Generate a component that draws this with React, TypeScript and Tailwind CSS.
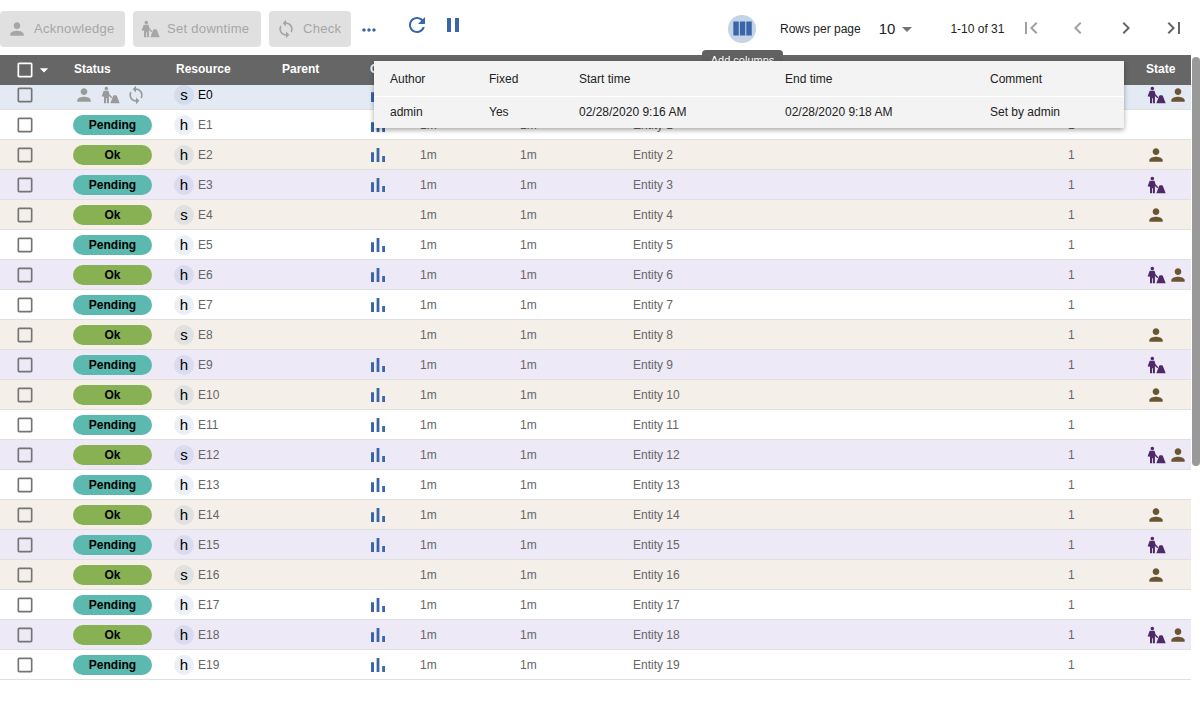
import React from 'react';

const paths = {
  person: 'M12 12c2.21 0 4-1.79 4-4s-1.79-4-4-4-4 1.79-4 4 1.79 4 4 4zm0 2c-2.67 0-8 1.34-8 4v2h16v-2c0-2.66-5.33-4-8-4z',
  sync: 'M12 4V1L8 5l4 4V6c3.31 0 6 2.69 6 6 0 1.01-.25 1.97-.7 2.8l1.46 1.46C19.54 15.03 20 13.57 20 12c0-4.42-3.58-8-8-8zm0 14c-3.31 0-6-2.69-6-6 0-1.01.25-1.97.7-2.8L5.24 7.74C4.46 8.97 4 10.43 4 12c0 4.42 3.58 8 8 8v3l4-4-4-4v3z',
  refresh: 'M17.65 6.35C16.2 4.9 14.21 4 12 4c-4.42 0-7.99 3.58-7.99 8s3.57 8 7.99 8c3.73 0 6.84-2.55 7.73-6h-2.08c-.82 2.33-3.04 4-5.65 4-3.31 0-6-2.69-6-6s2.69-6 6-6c1.66 0 3.14.69 4.22 1.78L13 11h7V4l-2.35 2.35z',
  pause: 'M6 19h4V5H6v14zm8-14v14h4V5h-4z',
  columns: 'M10 18h5V5h-5v13zm-6 0h5V5H4v13zM16 5v13h5V5h-5z',
  bars: 'M5 9.2h3V19H5zM10.6 5h2.8v14h-2.8zm5.6 8H19v6h-2.8z',
  first: 'M18.41 16.59L13.82 12l4.59-4.59L17 6l-6 6 6 6zM6 6h2v12H6z',
  last: 'M5.59 7.41L10.18 12l-4.59 4.59L7 18l6-6-6-6zM16 6h2v12h-2z',
  left: 'M15.41 16.59L10.83 12l4.58-4.59L14 6l-6 6 6 6 1.41-1.41z',
  right: 'M8.59 16.59L13.17 12 8.59 7.41 10 6l6 6-6 6-1.41-1.41z',
  checkbox: 'M19 5v14H5V5h14m0-2H5c-1.1 0-2 .9-2 2v14c0 1.1.9 2 2 2h14c1.1 0 2-.9 2-2V5c0-1.1-.9-2-2-2z',
  more: 'M6 10c-1.1 0-2 .9-2 2s.9 2 2 2 2-.9 2-2-.9-2-2-2zm12 0c-1.1 0-2 .9-2 2s.9 2 2 2 2-.9 2-2-.9-2-2-2zm-6 0c-1.1 0-2 .9-2 2s.9 2 2 2 2-.9 2-2-.9-2-2-2z',
  drop: 'M7 10l5 5 5-5z',
  downtime: 'M7.6 2a2.2 2.2 0 1 1 0 4.4a2.2 2.2 0 0 1 0-4.4zM4.4 7h5.8l1.2 4.2 3.3 3.6-1 1-3-2.6V22H8.3v-6.2H7.3V22H4.8v-8.2l-1.1.4L2 13.4zM12.4 22l3-8c.4-1 1.1-1.6 2.1-1.6h1c1 0 1.7.6 2.1 1.6l3 8z',
};

const Icon = ({ d, className }: { d: string; className: string }) => (
  <svg viewBox="0 0 24 24" fill="currentColor" className={className}>
    <path d={d} />
  </svg>
);

type RowData = {
  res: string;
  status: 'Pending' | 'Ok';
  bg: string;
  graph: boolean;
  downtime: boolean;
  ack: boolean;
};

const WHITE = 'bg-white';
const TAN = 'bg-[#f4f0e9]';
const PURPLE = 'bg-[#ede9f7]';

const rows: RowData[] = [
  { res: 's', status: 'Ok', bg: 'bg-[#e4eaf4]', graph: true, downtime: true, ack: true },
  { res: 'h', status: 'Pending', bg: WHITE, graph: true, downtime: false, ack: false },
  { res: 'h', status: 'Ok', bg: TAN, graph: true, downtime: false, ack: true },
  { res: 'h', status: 'Pending', bg: PURPLE, graph: true, downtime: true, ack: false },
  { res: 's', status: 'Ok', bg: TAN, graph: false, downtime: false, ack: true },
  { res: 'h', status: 'Pending', bg: WHITE, graph: true, downtime: false, ack: false },
  { res: 'h', status: 'Ok', bg: PURPLE, graph: true, downtime: true, ack: true },
  { res: 'h', status: 'Pending', bg: WHITE, graph: true, downtime: false, ack: false },
  { res: 's', status: 'Ok', bg: TAN, graph: false, downtime: false, ack: true },
  { res: 'h', status: 'Pending', bg: PURPLE, graph: true, downtime: true, ack: false },
  { res: 'h', status: 'Ok', bg: TAN, graph: true, downtime: false, ack: true },
  { res: 'h', status: 'Pending', bg: WHITE, graph: true, downtime: false, ack: false },
  { res: 's', status: 'Ok', bg: PURPLE, graph: true, downtime: true, ack: true },
  { res: 'h', status: 'Pending', bg: WHITE, graph: true, downtime: false, ack: false },
  { res: 'h', status: 'Ok', bg: TAN, graph: true, downtime: false, ack: true },
  { res: 'h', status: 'Pending', bg: PURPLE, graph: true, downtime: true, ack: false },
  { res: 's', status: 'Ok', bg: TAN, graph: false, downtime: false, ack: true },
  { res: 'h', status: 'Pending', bg: WHITE, graph: true, downtime: false, ack: false },
  { res: 'h', status: 'Ok', bg: PURPLE, graph: true, downtime: true, ack: true },
  { res: 'h', status: 'Pending', bg: WHITE, graph: true, downtime: false, ack: false },
];

const gridCols = 'grid grid-cols-[73px_101px_108px_88px_50px_100px_113px_435px_78px_45px] items-center';

const ActionButton = ({ d, label, className }: { d: string; label: string; className: string }) => (
  <button className={`flex h-9 items-center rounded bg-[#e0e0e0] pl-[7px] text-[13px] text-[#a6a6a6] ${className}`}>
    <Icon d={d} className="h-5 w-5 text-[#a6a6a6]" />
    <span className="ml-[7px] tracking-[0.3px]">{label}</span>
  </button>
);

const Row = ({ row, index }: { row: RowData; index: number }) => (
  <div className={`${gridCols} h-[30px] border-b border-[#e0e0e0] text-xs text-[#666666] ${row.bg}`}>
    <div className="flex justify-center pr-[23px]">
      <Icon d={paths.checkbox} className="h-5 w-5 text-[#757575]" />
    </div>
    {index === 0 ? (
      <div className="flex gap-1.5 pl-px text-[#9a9a9a]">
        <Icon d={paths.person} className="h-5 w-5" />
        <Icon d={paths.downtime} className="h-5 w-5" />
        <Icon d={paths.sync} className="h-5 w-5" />
      </div>
    ) : (
      <div
        className={`flex h-5 w-[79px] items-center justify-center rounded-full text-xs font-bold text-black ${
          row.status === 'Ok' ? 'bg-[#88b153]' : 'bg-[#5bb9af]'
        }`}
      >
        {row.status}
      </div>
    )}
    <div className="flex items-center gap-1">
      <span className="flex h-5 w-5 items-center justify-center rounded-full bg-[#3a65a8]/10 text-[15px] text-black">
        {row.res}
      </span>
      <span className={index === 0 ? 'text-black' : ''}>E{index}</span>
    </div>
    <div />
    <div>{row.graph && <Icon d={paths.bars} className="-ml-1 h-6 w-6 text-[#3a65a8]" />}</div>
    <div>1m</div>
    <div>1m</div>
    <div>Entity {index}</div>
    <div>1</div>
    <div className="flex gap-0.5">
      {row.downtime && <Icon d={paths.downtime} className="h-5 w-5 text-[#4f2a68]" />}
      {row.ack && <Icon d={paths.person} className="h-5 w-5 text-[#6b5431]" />}
    </div>
  </div>
);

const App = () => {
  return (
    <div className="relative h-[720px] overflow-hidden bg-white font-['Liberation_Sans',Arial,sans-serif]">
      {/* Toolbar */}
      <div className="flex h-[55px] items-start">
        <ActionButton d={paths.person} label="Acknowledge" className="mt-[11px] w-[125px]" />
        <ActionButton d={paths.downtime} label="Set downtime" className="ml-2 mt-[11px] w-[128px]" />
        <ActionButton d={paths.sync} label="Check" className="ml-2 mt-[11px] w-[82px]" />
        <Icon d={paths.more} className="ml-2 mt-5 h-5 w-5 text-[#3a65a8]" />
        <Icon d={paths.refresh} className="ml-[26px] mt-[13px] h-6 w-6 text-[#3a65a8]" />
        <Icon d={paths.pause} className="ml-3 mt-[13px] h-6 w-6 text-[#3a65a8]" />
        <div className="ml-[263px] mt-[15px] flex h-7 w-7 items-center justify-center rounded-full bg-[#c4d3e7]">
          <Icon d={paths.columns} className="h-[26px] w-[26px] shrink-0 text-[#3a65a8]" />
        </div>
        <span className="ml-6 mt-[21px] text-xs text-[#222222]">Rows per page</span>
        <span className="ml-[18px] mt-5 text-[15px] leading-[18px] text-[#222222]">10</span>
        <Icon d={paths.drop} className="mt-[17px] h-6 w-6 text-[#757575]" />
        <span className="ml-[31px] mt-[21px] text-xs text-[#222222]">1-10 of 31</span>
        <Icon d={paths.first} className="ml-[15px] mt-4 h-6 w-6 text-[#a0a0a0]" />
        <Icon d={paths.left} className="ml-[23px] mt-4 h-6 w-6 text-[#a0a0a0]" />
        <Icon d={paths.right} className="ml-6 mt-4 h-6 w-6 text-[#666666]" />
        <Icon d={paths.last} className="ml-6 mt-4 h-6 w-6 text-[#666666]" />
      </div>

      {/* Table */}
      <div className="relative flex items-start">
        <div className="w-[1191px]">
          <div className={`${gridCols} relative z-10 h-[30px] bg-[#666666] text-xs font-bold text-white`}>
            <div className="flex items-center pl-[15px]">
              <Icon d={paths.checkbox} className="h-5 w-5 shrink-0 text-white" />
              <Icon d={paths.drop} className="-ml-px h-5 w-5 shrink-0 text-white" />
            </div>
            <div className="pb-0.5 pl-px">Status</div>
            <div className="pb-0.5 pl-0.5">Resource</div>
            <div className="pb-0.5">Parent</div>
            <div className="pb-0.5">Graph</div>
            <div className="pb-0.5">Duration</div>
            <div className="pb-0.5">Tries</div>
            <div className="pb-0.5">Information</div>
            <div className="pb-0.5">Count</div>
            <div className="pb-0.5">State</div>
          </div>
          <div className="h-[595px] overflow-hidden">
            <div className="-mt-[5px]">
              {rows.map((row, i) => (
                <Row key={i} row={row} index={i} />
              ))}
            </div>
          </div>
        </div>
        <div className="ml-px w-2 pt-0.5">
          <div className="h-[409px] rounded-full bg-[#999999]" />
        </div>

        {/* Details popup */}
        <div className="absolute left-[374px] top-[6px] z-30 w-[750px] bg-[#f3f3f3] text-xs text-[#222222] shadow-[0_2px_5px_rgba(0,0,0,0.35)]">
          <div className="grid h-9 grid-cols-[99px_90px_206px_205px_1fr] items-center border-b border-white pl-4">
            <span>Author</span>
            <span>Fixed</span>
            <span>Start time</span>
            <span>End time</span>
            <span>Comment</span>
          </div>
          <div className="grid h-[31px] grid-cols-[99px_90px_206px_205px_1fr] items-center pb-0.5 pl-4">
            <span>admin</span>
            <span>Yes</span>
            <span>02/28/2020 9:16 AM</span>
            <span>02/28/2020 9:18 AM</span>
            <span>Set by admin</span>
          </div>
        </div>
      </div>

      {/* Tooltip, cut off by the popup */}
      <div className="absolute left-[702px] top-[50px] z-20 flex h-5 w-[81px] items-center justify-center rounded bg-[#616161] text-[11px] text-white">
        Add columns
      </div>
    </div>
  );
};

export default App;
